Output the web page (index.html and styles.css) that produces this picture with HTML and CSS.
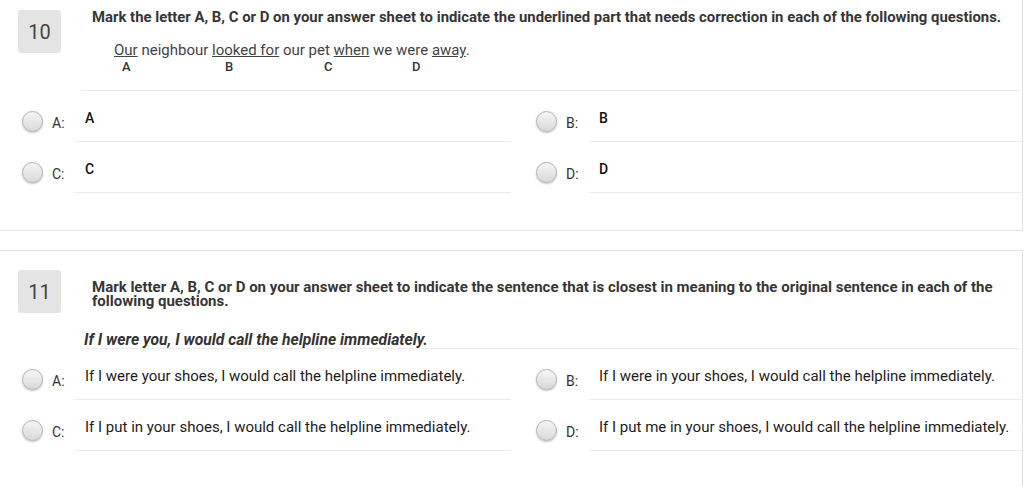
FILE: index.html
```html
<!DOCTYPE html>
<html lang="en">
<head>
<meta charset="utf-8">
<title>Quiz</title>
<link rel="stylesheet" href="styles.css">
</head>
<body>
<div class="page">
  <section class="card card-first">
    <div class="q-head">
      <div class="q-num">10</div>
      <div class="q-body">
        <div class="q-title">Mark the letter A, B, C or D on your answer sheet to indicate the underlined part that needs correction in each of the following questions.</div>
        <div class="q-sentence">
          <div class="sent-line"><u>Our</u> neighbour <u>looked for</u> our pet <u>when</u> we were <u>away</u>.</div>
          <div class="markers"><span>A</span><span>B</span><span>C</span><span>D</span></div>
        </div>
      </div>
    </div>
    <div class="options">
      <div class="opt opt-left"><span class="radio"></span><span class="opt-label">A:</span><div class="opt-text strong">A</div></div>
      <div class="opt opt-right"><span class="radio"></span><span class="opt-label">B:</span><div class="opt-text strong">B</div></div>
      <div class="opt opt-left"><span class="radio"></span><span class="opt-label">C:</span><div class="opt-text strong">C</div></div>
      <div class="opt opt-right"><span class="radio"></span><span class="opt-label">D:</span><div class="opt-text strong">D</div></div>
    </div>
  </section>

  <section class="card">
    <div class="q-head">
      <div class="q-num">11</div>
      <div class="q-body">
        <div class="q-title q-title-low">Mark letter A, B, C or D on your answer sheet to indicate the sentence that is closest in meaning to the original sentence in each of the following questions.</div>
        <div class="q-italic">If I were you, I would call the helpline immediately.</div>
      </div>
    </div>
    <div class="options">
      <div class="opt opt-left"><span class="radio"></span><span class="opt-label">A:</span><div class="opt-text">If I were your shoes, I would call the helpline immediately.</div></div>
      <div class="opt opt-right"><span class="radio"></span><span class="opt-label">B:</span><div class="opt-text">If I were in your shoes, I would call the helpline immediately.</div></div>
      <div class="opt opt-left"><span class="radio"></span><span class="opt-label">C:</span><div class="opt-text">If I put in your shoes, I would call the helpline immediately.</div></div>
      <div class="opt opt-right"><span class="radio"></span><span class="opt-label">D:</span><div class="opt-text">If I put me in your shoes, I would call the helpline immediately.</div></div>
    </div>
  </section>
</div>
</body>
</html>
```

FILE: styles.css
```css
html, body {
  margin: 0;
  padding: 0;
  background: #ffffff;
  font-family: Roboto, "Liberation Sans", Arial, sans-serif;
  color: #222;
  overflow: hidden;
}

.page {
  margin-top: -10px;
}

.card {
  width: 1022px;
  background: #fff;
  border: 1px solid #e2e2e2;
  border-left: none;
  padding-top: 19px;
  padding-bottom: 37px;
}

.card + .card {
  margin-top: 19px;
}

.q-head {
  display: flex;
  align-items: flex-start;
}

.q-num {
  flex: 0 0 43px;
  height: 43px;
  margin-left: 18px;
  background: #e4e4e4;
  border-radius: 3px;
  display: flex;
  align-items: center;
  justify-content: center;
  font-size: 20px;
  color: #444;
}

.q-body {
  flex: 1;
  margin-left: 21px;
  margin-right: 2px;
  border-bottom: 1px solid #ececec;
}

.q-title {
  padding-left: 10px;
  padding-right: 4px;
  font-size: 14.9px;
  line-height: 15px;
  font-weight: bold;
  color: #363636;
}

.q-title-low {
  margin-top: 10px;
  font-size: 15px;
  line-height: 14px;
}

.q-sentence {
  padding-left: 32px;
  padding-bottom: 16px;
}

.sent-line {
  margin-top: 17px;
  font-size: 15px;
  line-height: 16px;
  color: #444;
}

.markers {
  margin-top: 2px;
  padding-left: 8px;
  display: grid;
  grid-template-columns: 103px 99px 88px auto;
  font-size: 13px;
  line-height: 14px;
  font-weight: 500;
  color: #333;
}

.q-italic {
  margin-top: 24px;
  padding-left: 2px;
  font-size: 15.7px;
  line-height: 16px;
  font-weight: bold;
  font-style: italic;
  color: #333;
}

.options {
  display: grid;
  grid-template-columns: 512px 1fr;
}

.opt {
  display: flex;
  align-items: flex-start;
}

.opt-left {
  padding-left: 22px;
  padding-right: 1px;
}

.opt-right {
  padding-left: 24px;
}

.radio {
  flex: 0 0 21px;
  width: 21px;
  height: 21px;
  box-sizing: border-box;
  margin-top: 20px;
  margin-right: 9px;
  border-radius: 50%;
  border: 1px solid #b3b3b3;
  background: linear-gradient(#f6f6f6, #d9d9d9);
  box-shadow: 0 1px 2px rgba(0, 0, 0, 0.25);
}

.opt-label {
  flex: 0 0 23px;
  margin-top: 25px;
  font-size: 14px;
  line-height: 14px;
  color: #333;
}

.opt-text {
  flex: 1;
  padding: 19px 10px 15px;
  font-size: 15px;
  line-height: 16px;
  color: #1c1c1c;
  border-bottom: 1px solid #ececec;
}

.opt-text.strong {
  font-size: 14px;
  font-weight: 500;
  color: #111;
}
```
